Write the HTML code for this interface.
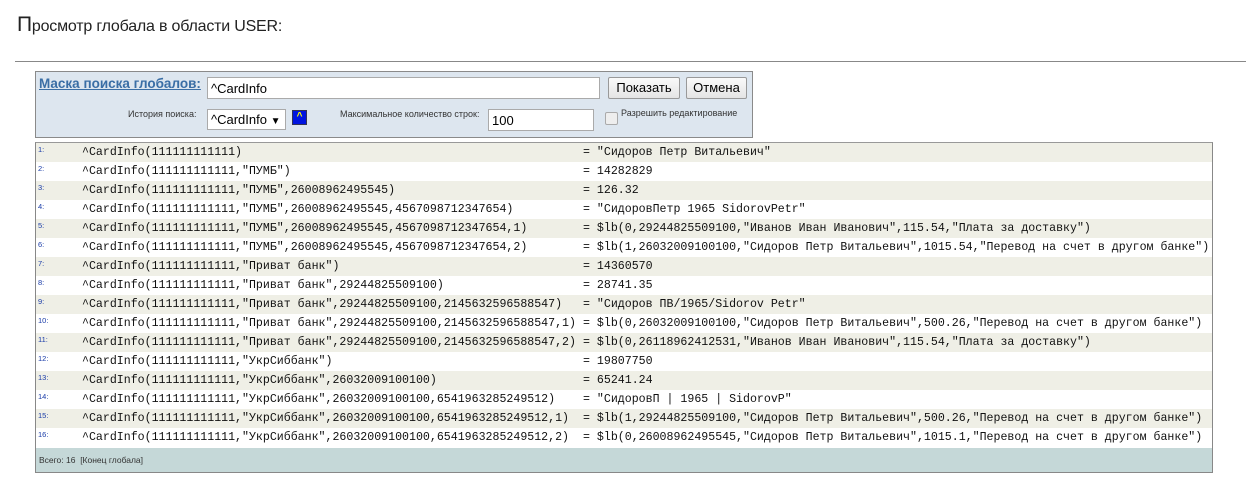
<!DOCTYPE html>
<html><head><meta charset="utf-8"><style>
body{margin:0;background:#fff;font-family:"Liberation Sans",Arial,sans-serif;width:1246px;height:489px;position:relative;overflow:hidden}
.abs{position:absolute}
#title{left:17px;top:13px;font-size:16px;color:#222;letter-spacing:-0.2px}
#title b{font-weight:normal;font-size:21px}
#hr{left:15px;top:61px;width:1231px;height:1px;background:#888}
#panel{left:35px;top:71px;width:716px;height:65px;background:#dde6ef;border:1px solid #8a8a8a}
.lbl{font-size:9px;color:#333}
input,.box{position:absolute;border:1px solid #aaa;background:#fff;font-size:13px;font-family:"Liberation Sans",sans-serif;box-sizing:border-box;padding:3px 3px;margin:0}
.btn{position:absolute;border:1px solid #999;border-radius:2px;background:linear-gradient(#fafafa,#e4e4e4);font-size:13px;text-align:center;line-height:19px;box-sizing:border-box;height:22px}
#tbl{left:35px;top:142px;width:1176px;height:329px;border:1px solid #888;border-top-color:#999}
.row{position:absolute;left:0;width:1176px;height:19px;font-family:"Liberation Mono",monospace;font-size:11.6px;line-height:19px;color:#111;white-space:pre}
.row:nth-child(odd){background:#efefe6}
.n{position:absolute;left:2px;top:-3px;font-size:7.5px;color:#1a3ca8;font-family:"Liberation Sans",sans-serif}
.k{position:absolute;left:46px}
.v{position:absolute;left:547px}
#foot{position:absolute;left:0;top:305px;width:1176px;height:24px;background:#c5d8d8;font-size:8.5px;line-height:24px;padding-left:3px;box-sizing:border-box;color:#333}
</style></head><body>
<div id="title" class="abs"><b>П</b>росмотр глобала в области USER:</div>
<div id="hr" class="abs"></div>
<div id="panel" class="abs">
<div class="abs" style="left:3px;top:4px;font-size:13.5px;font-weight:bold;color:#3a6ea5;text-decoration:underline">Маска поиска глобалов:</div>
<input style="left:171px;top:5px;width:393px;height:22px" value="^CardInfo">
<div class="btn" style="left:572px;top:5px;width:72px">Показать</div>
<div class="btn" style="left:650px;top:5px;width:61px">Отмена</div>
<div class="abs lbl" style="left:92px;top:37px">История поиска:</div>
<div class="box" style="left:171px;top:37px;width:79px;height:21px;padding:2px 3px">^CardInfo <span style="font-size:10px">▼</span></div>
<div class="abs" style="left:256px;top:38px;width:15px;height:15px;background:#0014e0;border:1px solid #335;box-sizing:border-box;color:#ff0;font-size:10px;line-height:12px;text-align:center;font-weight:bold">^</div>
<div class="abs lbl" style="left:304px;top:37px">Максимальное количество строк:</div>
<input style="left:452px;top:37px;width:106px;height:22px" value="100">
<div class="abs" style="left:569px;top:40px;width:11px;height:11px;border:1px solid #aaa;border-radius:2px;background:#eee"></div>
<div class="abs lbl" style="left:585px;top:36px">Разрешить редактирование</div>
</div>
<div id="tbl" class="abs">
<div class="row" style="top:0"><span class="n">1:</span><span class="k">^CardInfo(111111111111)</span><span class="v">= "Сидоров Петр Витальевич"</span></div>
<div class="row" style="top:19px"><span class="n">2:</span><span class="k">^CardInfo(111111111111,"ПУМБ")</span><span class="v">= 14282829</span></div>
<div class="row" style="top:38px"><span class="n">3:</span><span class="k">^CardInfo(111111111111,"ПУМБ",26008962495545)</span><span class="v">= 126.32</span></div>
<div class="row" style="top:57px"><span class="n">4:</span><span class="k">^CardInfo(111111111111,"ПУМБ",26008962495545,4567098712347654)</span><span class="v">= "СидоровПетр 1965 SidorovPetr"</span></div>
<div class="row" style="top:76px"><span class="n">5:</span><span class="k">^CardInfo(111111111111,"ПУМБ",26008962495545,4567098712347654,1)</span><span class="v">= $lb(0,29244825509100,"Иванов Иван Иванович",115.54,"Плата за доставку")</span></div>
<div class="row" style="top:95px"><span class="n">6:</span><span class="k">^CardInfo(111111111111,"ПУМБ",26008962495545,4567098712347654,2)</span><span class="v">= $lb(1,26032009100100,"Сидоров Петр Витальевич",1015.54,"Перевод на счет в другом банке")</span></div>
<div class="row" style="top:114px"><span class="n">7:</span><span class="k">^CardInfo(111111111111,"Приват банк")</span><span class="v">= 14360570</span></div>
<div class="row" style="top:133px"><span class="n">8:</span><span class="k">^CardInfo(111111111111,"Приват банк",29244825509100)</span><span class="v">= 28741.35</span></div>
<div class="row" style="top:152px"><span class="n">9:</span><span class="k">^CardInfo(111111111111,"Приват банк",29244825509100,2145632596588547)</span><span class="v">= "Сидоров ПВ/1965/Sidorov Petr"</span></div>
<div class="row" style="top:171px"><span class="n">10:</span><span class="k">^CardInfo(111111111111,"Приват банк",29244825509100,2145632596588547,1)</span><span class="v">= $lb(0,26032009100100,"Сидоров Петр Витальевич",500.26,"Перевод на счет в другом банке")</span></div>
<div class="row" style="top:190px"><span class="n">11:</span><span class="k">^CardInfo(111111111111,"Приват банк",29244825509100,2145632596588547,2)</span><span class="v">= $lb(0,26118962412531,"Иванов Иван Иванович",115.54,"Плата за доставку")</span></div>
<div class="row" style="top:209px"><span class="n">12:</span><span class="k">^CardInfo(111111111111,"УкрСиббанк")</span><span class="v">= 19807750</span></div>
<div class="row" style="top:228px"><span class="n">13:</span><span class="k">^CardInfo(111111111111,"УкрСиббанк",26032009100100)</span><span class="v">= 65241.24</span></div>
<div class="row" style="top:247px"><span class="n">14:</span><span class="k">^CardInfo(111111111111,"УкрСиббанк",26032009100100,6541963285249512)</span><span class="v">= "СидоровП | 1965 | SidorovP"</span></div>
<div class="row" style="top:266px"><span class="n">15:</span><span class="k">^CardInfo(111111111111,"УкрСиббанк",26032009100100,6541963285249512,1)</span><span class="v">= $lb(1,29244825509100,"Сидоров Петр Витальевич",500.26,"Перевод на счет в другом банке")</span></div>
<div class="row" style="top:285px"><span class="n">16:</span><span class="k">^CardInfo(111111111111,"УкрСиббанк",26032009100100,6541963285249512,2)</span><span class="v">= $lb(0,26008962495545,"Сидоров Петр Витальевич",1015.1,"Перевод на счет в другом банке")</span></div>
<div id="foot">Всего: 16 &nbsp;[Конец глобала]</div>
</div>
</body></html>
